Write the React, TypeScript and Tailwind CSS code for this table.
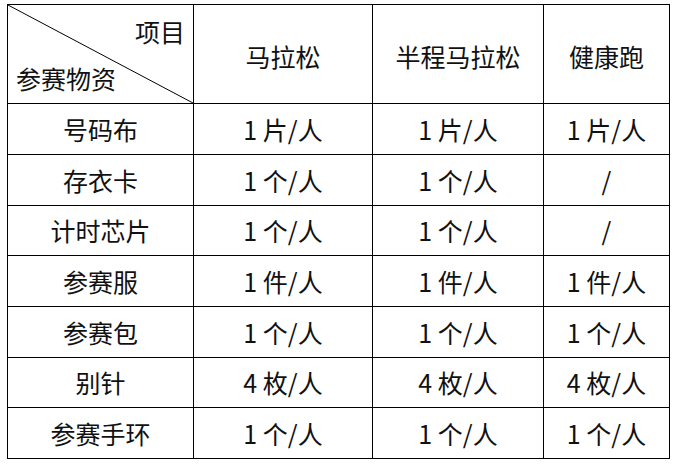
const columns = ['马拉松', '半程马拉松', '健康跑']

const rows: [string, string, string, string][] = [
  ['号码布', '1 片/人', '1 片/人', '1 片/人'],
  ['存衣卡', '1 个/人', '1 个/人', '/'],
  ['计时芯片', '1 个/人', '1 个/人', '/'],
  ['参赛服', '1 件/人', '1 件/人', '1 件/人'],
  ['参赛包', '1 个/人', '1 个/人', '1 个/人'],
  ['别针', '4 枚/人', '4 枚/人', '4 枚/人'],
  ['参赛手环', '1 个/人', '1 个/人', '1 个/人'],
]

const cell = 'border-r border-b border-black flex items-center justify-center text-[25px] leading-[25px] text-[#111]'

export default function App() {
  return (
    <div className="w-[682px] h-[466px] bg-white pt-[4px] pl-[7px]" style={{ fontFamily: '"Noto Sans CJK SC", "Noto Sans", sans-serif' }}>
      <div className="grid grid-cols-[186px_179px_171px_126px] grid-rows-[99px_51px_51px_50px_51px_51px_50px_51px] w-[663px] border-l border-t border-black">
        {/* corner cell with diagonal */}
        <div className="relative border-r border-b border-black flex flex-col text-[25px] leading-[25px] text-[#111]">
          <svg className="absolute inset-0 w-full h-full" preserveAspectRatio="none" viewBox="0 0 100 100">
            <line x1="0" y1="0" x2="100" y2="100" stroke="#000" strokeWidth="1" vectorEffect="non-scaling-stroke" />
          </svg>
          <span className="self-end pr-[8px] pt-[14px]">项目</span>
          <span className="self-start pl-[8px] mt-[22px]">参赛物资</span>
        </div>
        {columns.map(c => (
          <div key={c} className={`${cell} pt-[4px]`}>{c}</div>
        ))}
        {rows.map(r => (
          r.map((v, i) => (
            <div key={r[0] + i} className={cell}>{v}</div>
          ))
        ))}
      </div>
    </div>
  )
}
